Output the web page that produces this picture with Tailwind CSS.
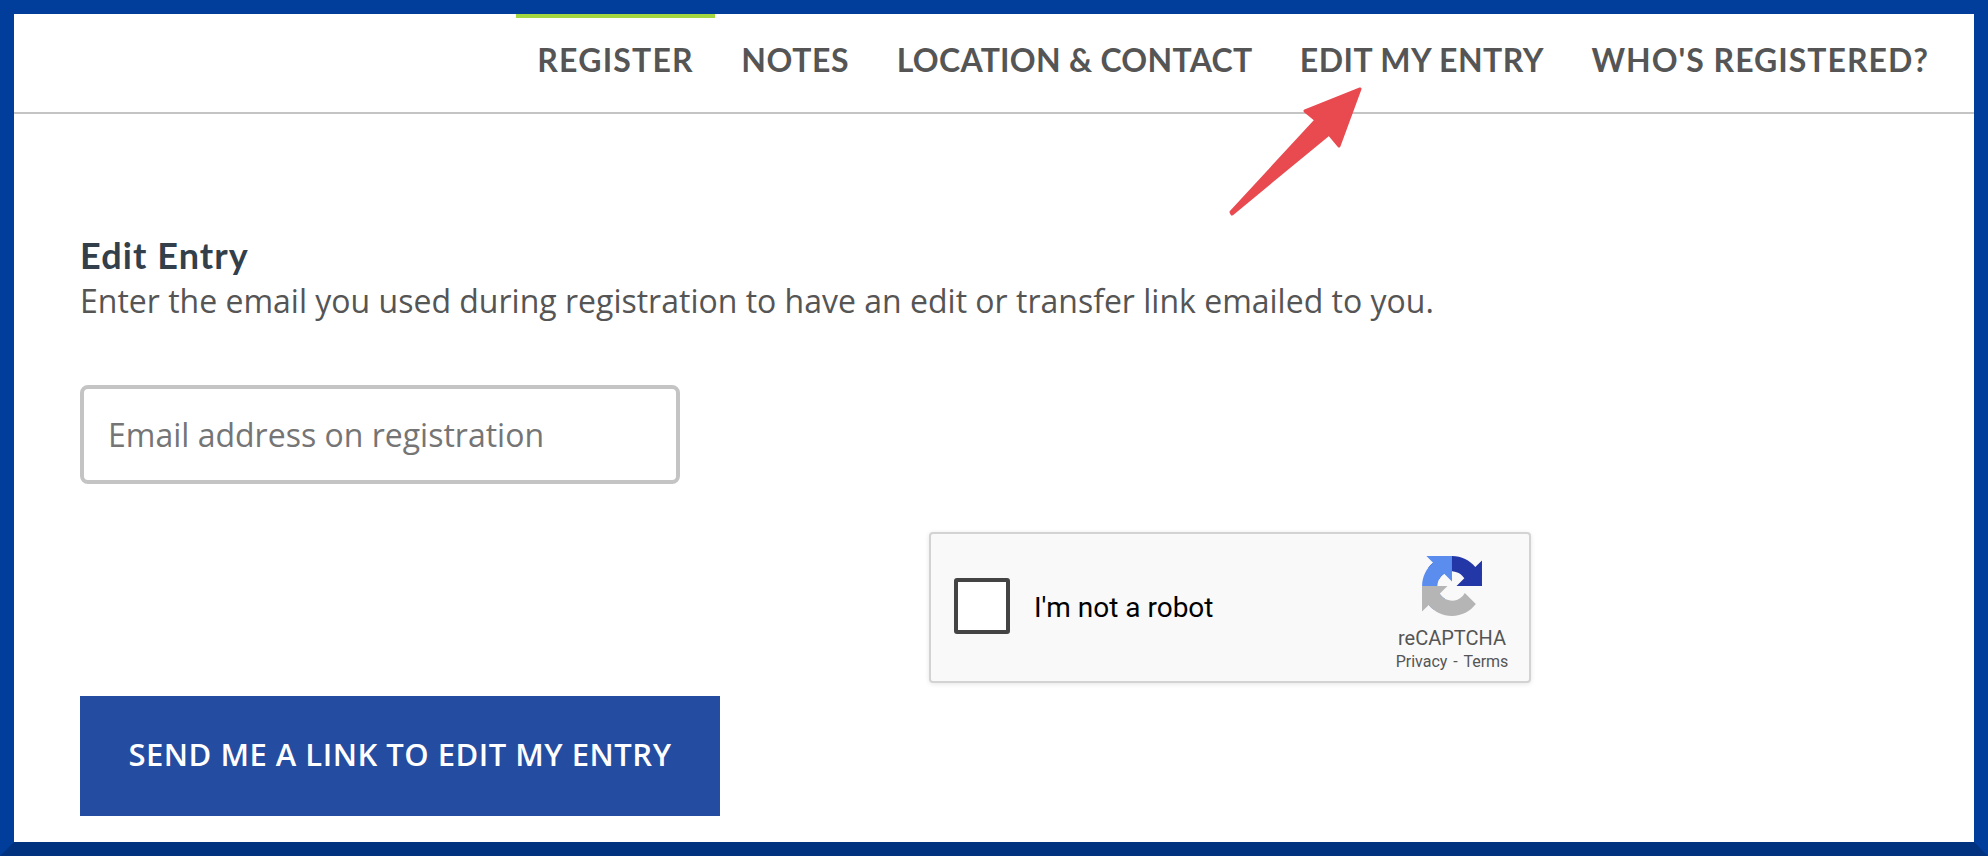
<!DOCTYPE html>
<html lang="en">
<head>
  <meta charset="UTF-8" />
  <title>Edit Entry</title>
  <script src="https://cdn.jsdelivr.net/npm/@tailwindcss/browser@4"></script>
</head>
<body class="overflow-hidden bg-white">
  <div class="relative h-[856px] w-[1988px] overflow-hidden border-[14px] border-[#013e9b] border-b-[#01327f] bg-white font-['Open_Sans',sans-serif]">
    <!-- nav -->
    <nav class="flex h-[100px] justify-end gap-[5.5px] border-b-2 border-[#c4c4c4] pr-[24px] font-['Lato',sans-serif] text-[32px] font-bold text-[#555]">
      <a class="border-t-4 border-[#a3d63f] px-[21px] pt-[18px] tracking-[1.2px]">REGISTER</a>
      <a class="border-t-4 border-transparent px-[21px] pt-[18px] tracking-[0.6px]">NOTES</a>
      <a class="border-t-4 border-transparent px-[21px] pt-[18px] tracking-[0.27px]">LOCATION &amp; CONTACT</a>
      <a class="border-t-4 border-transparent px-[21px] pt-[18px] tracking-[0.45px]">EDIT MY ENTRY</a>
      <a class="border-t-4 border-transparent px-[21px] pt-[18px] tracking-[1px]">WHO'S REGISTERED?</a>
    </nav>

    <main class="pl-[66px] pt-[119px]">
      <h1 class="font-['Lato',sans-serif] text-[36px] leading-[45px] font-bold tracking-[1.1px] text-[#333f4a]">Edit Entry</h1>
      <p class="text-[32px] leading-[46px] text-[#555]">Enter the email you used during registration to have an edit or transfer link emailed to you.</p>

      <input class="mt-[61px] block h-[99px] w-[600px] rounded-[8px] border-4 border-[#c4c4c4] px-[24px] text-[32px] placeholder:text-[#757575]" placeholder="Email address on registration" />

      <!-- recaptcha -->
      <div class="mt-[48px] ml-[849px] flex h-[151px] w-[602px] items-center rounded-[4px] border-2 border-[#d3d3d3] bg-[#f9f9f9] pl-[23px] font-['Roboto',sans-serif] shadow-[0_1px_5px_rgba(0,0,0,0.1)]">
        <div class="mb-[3px] h-[56px] w-[56px] rounded-[3px] border-[4px] border-[#444] bg-white"></div>
        <span class="ml-[24px] text-[28px] text-black">I'm not a robot</span>
        <div class="ml-auto flex w-[128px] flex-col items-center pr-[26px] pt-[14px] text-[#555]">
          <svg class="h-[60px] w-[60px] shrink-0" viewBox="0 0 64 64">
            <path fill="#2337a6" d="M64 31.955l-.033-1.37V4.687l-7.16 7.16C50.948 4.674 42.033.093 32.05.093c-10.4 0-19.622 4.96-25.458 12.64l11.736 11.86a15.55 15.55 0 0 1 4.754-5.334c2.05-1.6 4.952-2.906 9-2.906.49 0 .868.057 1.146.164 5.014.396 9.36 3.163 11.92 7.18l-8.307 8.307c10.523-.04 22.4-.066 27.167.002" />
            <path fill="#5b8def" d="M31.955.002l-1.37.033H4.687l7.16 7.16C4.674 13.05.093 21.965.093 31.947c0 10.4 4.96 19.622 12.64 25.458l11.86-11.736a15.55 15.55 0 0 1-5.334-4.754c-1.6-2.05-2.906-4.952-2.906-9 0-.49.057-.868.164-1.146.396-5.014 3.163-9.36 7.18-11.92l8.307 8.307c-.04-10.523-.066-22.4.002-27.167" />
            <path fill="#b5b5b5" d="M.002 32.045l.033 1.37v25.9l7.16-7.16c5.857 7.173 14.772 11.754 24.754 11.754 10.4 0 19.622-4.96 25.458-12.64l-11.736-11.86a15.55 15.55 0 0 1-4.754 5.334c-2.05 1.6-4.952 2.906-9 2.906-.49 0-.868-.057-1.146-.164-5.014-.396-9.36-3.163-11.92-7.18l8.307-8.307c-10.523.04-22.4.066-27.167-.002" />
          </svg>
          <span class="mt-[10px] whitespace-nowrap text-[20px] leading-[24px]">reCAPTCHA</span>
          <span class="whitespace-nowrap text-[16px] leading-[24px] [word-spacing:2px]">Privacy - Terms</span>
        </div>
      </div>

      <button class="mt-[13px] block h-[120px] w-[640px] bg-[#244ca0] pb-[4px] text-center text-[31px] font-semibold tracking-[0.5px] text-white">SEND ME A LINK TO EDIT MY ENTRY</button>
    </main>

    <!-- annotation arrow -->
    <svg class="absolute left-[1214px] top-[70px] h-[136px] w-[136px]" viewBox="0 0 136 136">
      <path fill="#e84a4f" stroke="#e84a4f" stroke-width="3" stroke-linejoin="round" d="M132 5 L77 27 L88 36 L3 128 L4 130 L101 50 L111 62 Z" />
    </svg>
  </div>
</body>
</html>
